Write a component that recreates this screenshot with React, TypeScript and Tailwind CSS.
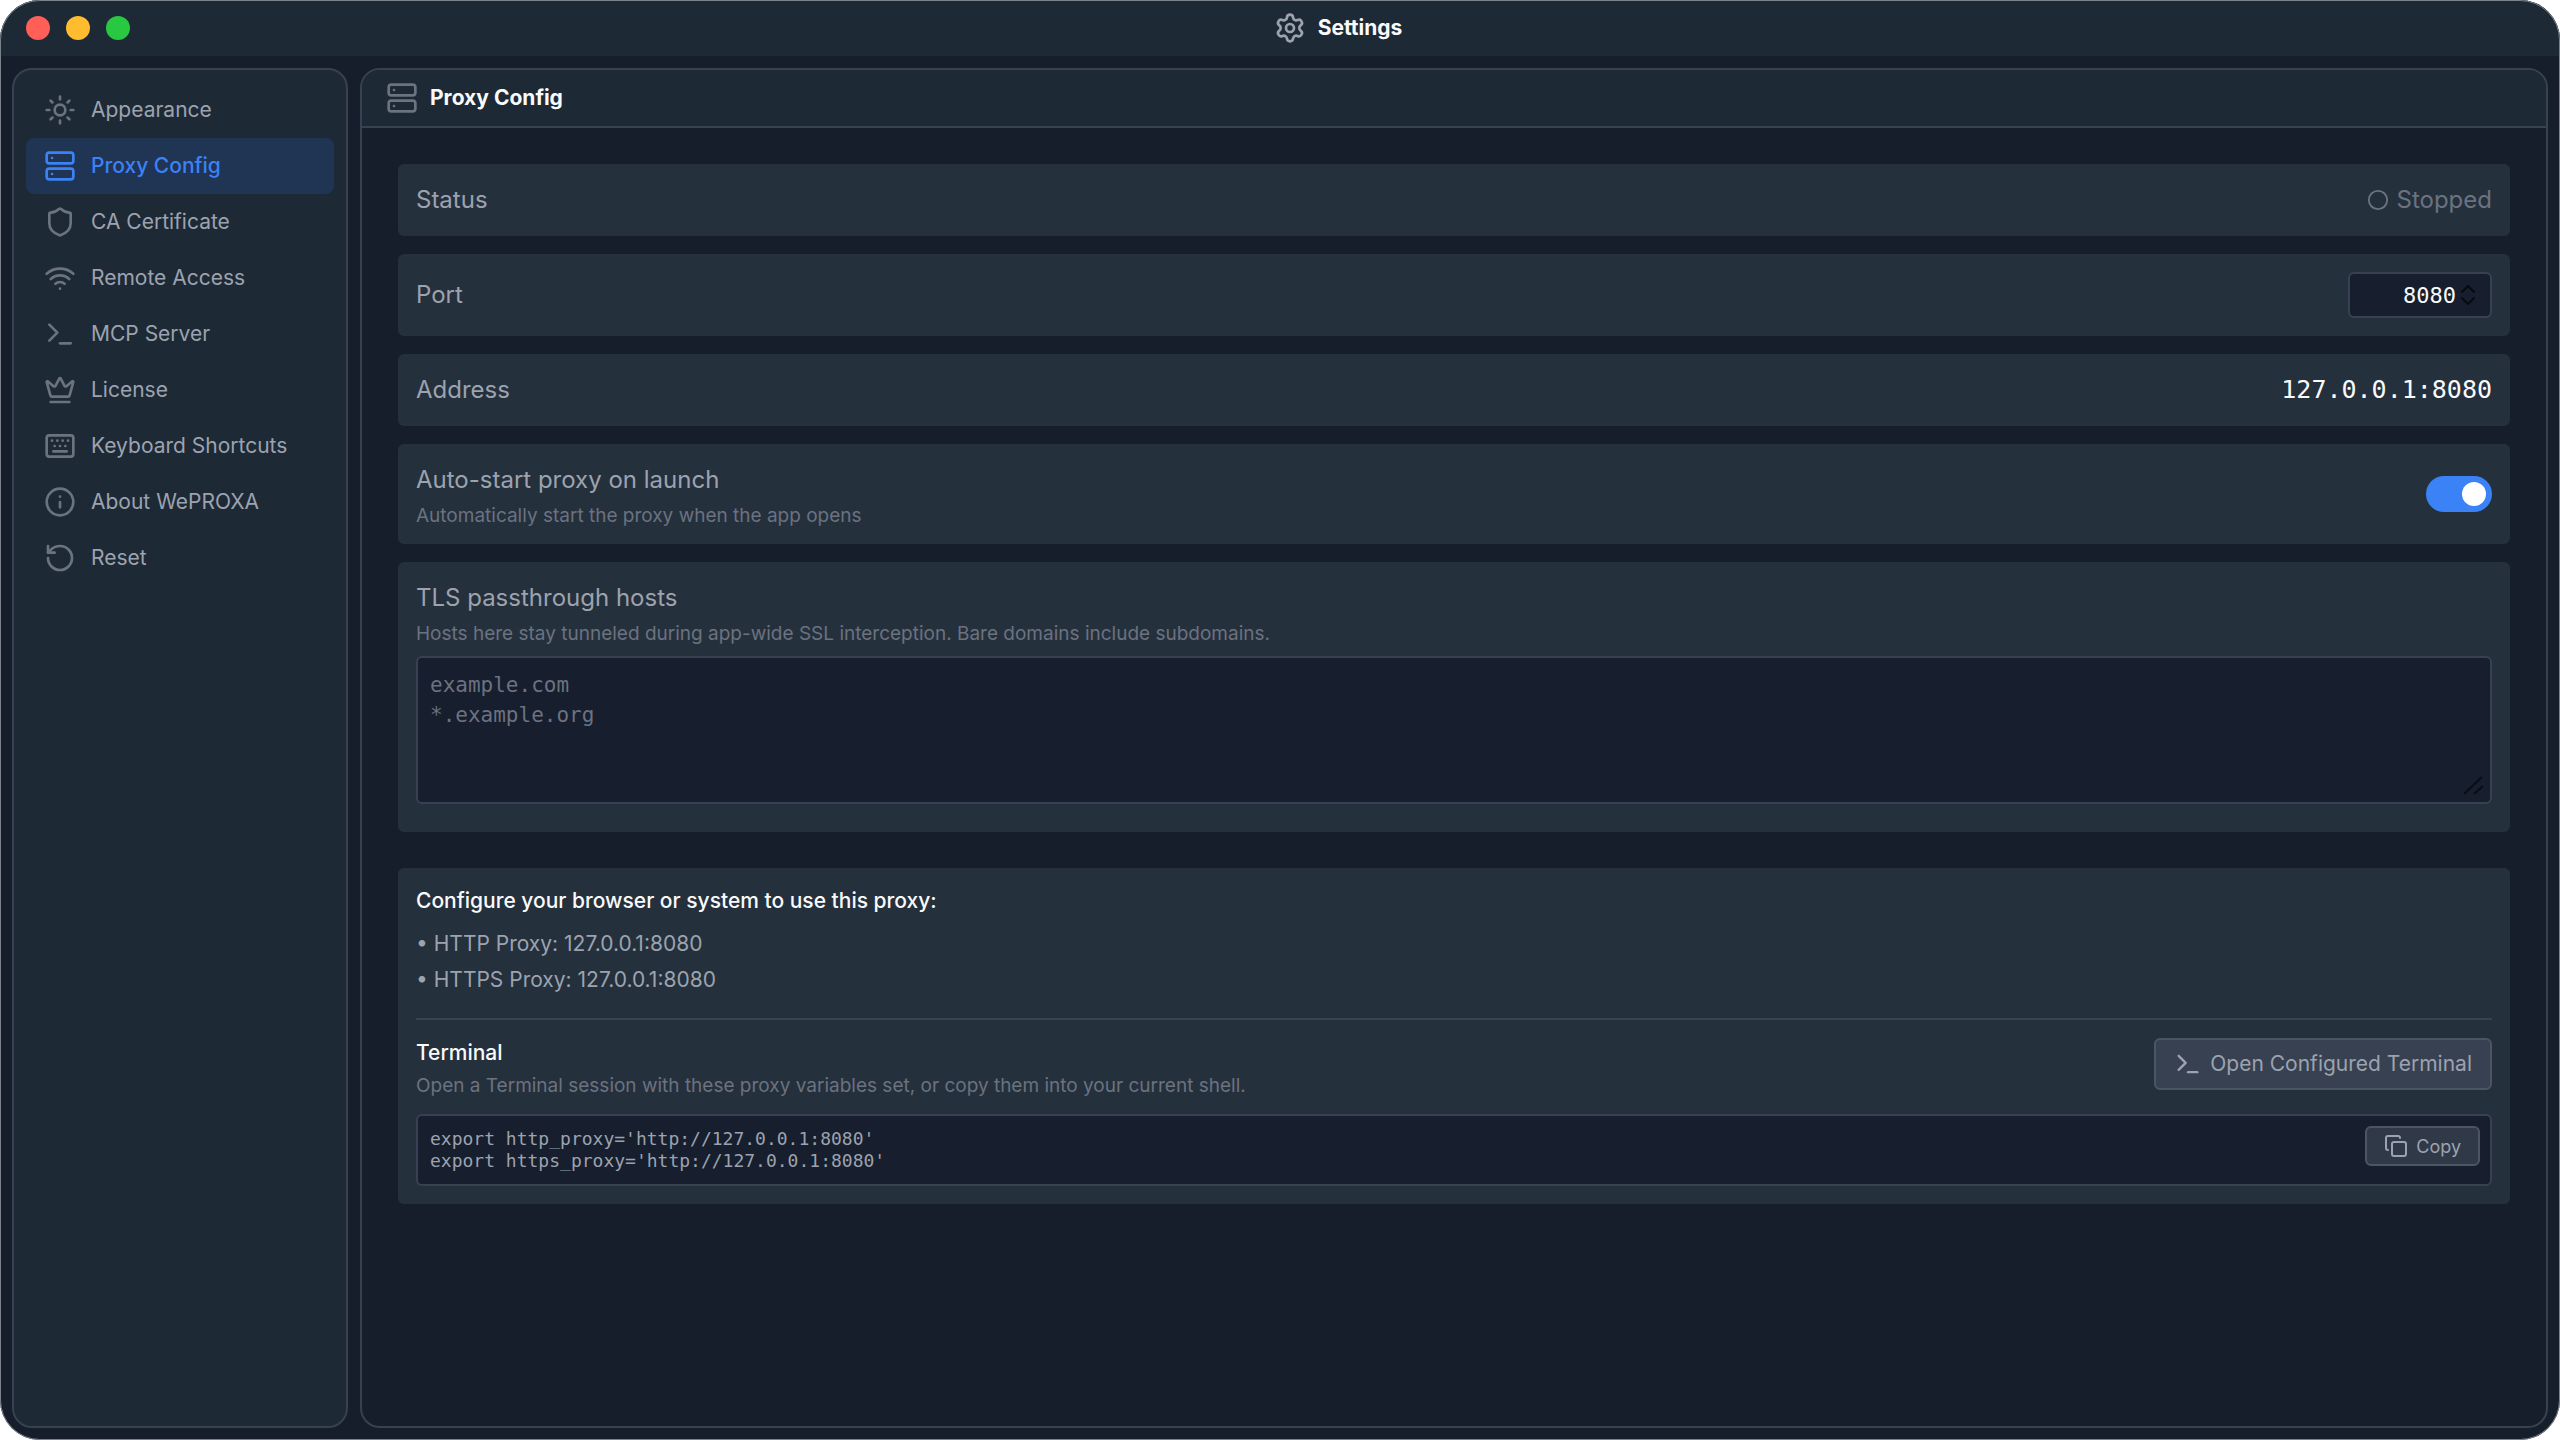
import { useState } from "react";
import type { ReactNode } from "react";
import {
  ChevronDown,
  ChevronUp,
  Circle,
  Copy,
  Crown,
  Info,
  Keyboard,
  RotateCcw,
  Server,
  Settings,
  Shield,
  Sun,
  Terminal,
  Wifi,
} from "lucide-react";

const navItems = [
  { label: "Appearance", icon: Sun },
  { label: "Proxy Config", icon: Server },
  { label: "CA Certificate", icon: Shield },
  { label: "Remote Access", icon: Wifi },
  { label: "MCP Server", icon: Terminal },
  { label: "License", icon: Crown },
  { label: "Keyboard Shortcuts", icon: Keyboard },
  { label: "About WePROXA", icon: Info },
  { label: "Reset", icon: RotateCcw },
];

const TitleBar = () => (
  <header className="flex h-14 shrink-0 items-center gap-3 bg-[#1e2936] px-[26px]">
    <div className="flex gap-4">
      <button aria-label="Close" className="size-6 rounded-full bg-[#ff5f57]" />
      <button aria-label="Minimize" className="size-6 rounded-full bg-[#febc2e]" />
      <button aria-label="Zoom" className="size-6 rounded-full bg-[#28c840]" />
    </div>
    <h1 className="flex grow items-center justify-center gap-3 text-[21px] font-bold text-gray-50">
      <Settings size={32} strokeWidth={2} className="text-[#9ca3af]" />
      Settings
    </h1>
  </header>
);

const Sidebar = ({ active, onSelect }: { active: string; onSelect: (label: string) => void }) => (
  <nav className="w-[336px] shrink-0 rounded-[20px] border-2 border-[#374151] bg-[#1e2936] p-3">
    <ul>
      {navItems.map(({ label, icon: Icon }) => (
        <li key={label}>
          <button
            onClick={() => onSelect(label)}
            className={
              label === active
                ? "flex h-14 w-full items-center gap-[15px] rounded-lg bg-[#203454] px-[18px] text-[21px] font-medium text-[#3b82f6]"
                : "flex h-14 w-full items-center gap-[15px] rounded-lg px-[18px] text-[21px] text-[#9ca3af]"
            }
          >
            <Icon
              size={32}
              strokeWidth={2}
              className={label === active ? "text-[#3b82f6]" : "text-[#6b7280]"}
            />
            {label}
          </button>
        </li>
      ))}
    </ul>
  </nav>
);

const Row = ({ children }: { children: ReactNode }) => (
  <div className="flex min-h-[72px] items-center justify-between rounded-md bg-[#25303d] px-[18px] text-[24px] text-[#9ca3af]">
    {children}
  </div>
);

const ProxyRows = () => {
  const [port, setPort] = useState(8080);
  const [autoStart, setAutoStart] = useState(true);

  return (
    <div className="flex flex-col gap-[18px]">
      <Row>
        <span>Status</span>
        <span className="flex items-center gap-2 text-[#6b7280]">
          <Circle size={22} strokeWidth={2} />
          Stopped
        </span>
      </Row>

      <Row>
        <label htmlFor="port">Port</label>
        <div className="my-[18px] flex h-[46px] w-36 items-center rounded-md border-2 border-[#374151] bg-[#171e2d] pr-[10px]">
          <input
            id="port"
            type="number"
            value={port}
            onChange={(e) => setPort(Number(e.target.value))}
            className="w-full min-w-0 appearance-none bg-transparent text-right font-['DejaVu_Sans_Mono',monospace] text-[22px] text-gray-50 outline-none [&::-webkit-inner-spin-button]:appearance-none"
          />
          <div className="flex flex-col text-[#070a10]">
            <button
              aria-label="Increase port"
              onClick={() => setPort(port + 1)}
              className="flex h-3 items-center"
            >
              <ChevronUp size={24} strokeWidth={2} className="shrink-0" />
            </button>
            <button
              aria-label="Decrease port"
              onClick={() => setPort(port - 1)}
              className="flex h-3 items-center"
            >
              <ChevronDown size={24} strokeWidth={2} className="shrink-0" />
            </button>
          </div>
        </div>
      </Row>

      <Row>
        <span>Address</span>
        <span className="font-['DejaVu_Sans_Mono',monospace] text-[25px] text-gray-50">127.0.0.1:8080</span>
      </Row>

      <Row>
        <label htmlFor="auto-start" className="flex flex-col pt-[18px] pb-[10px]">
          <span className="leading-9">Auto-start proxy on launch</span>
          <span className="text-[19px] leading-9 text-[#6b7280]">
            Automatically start the proxy when the app opens
          </span>
        </label>
        <input
          id="auto-start"
          type="checkbox"
          role="switch"
          checked={autoStart}
          onChange={(e) => setAutoStart(e.target.checked)}
          className="flex h-9 w-[66px] shrink-0 appearance-none items-center rounded-full bg-[#374151] p-1.5 before:size-6 before:rounded-full before:bg-white checked:justify-end checked:bg-[#3b82f6]"
        />
      </Row>

      <div className="rounded-md bg-[#25303d] px-[18px] pt-[18px] pb-7">
        <label htmlFor="tls-hosts" className="block text-[24px] leading-9 text-[#9ca3af]">
          TLS passthrough hosts
        </label>
        <p className="text-[19px] leading-9 text-[#6b7280]">
          Hosts here stay tunneled during app-wide SSL interception. Bare domains include subdomains.
        </p>
        <div className="relative mt-1">
          <textarea
            id="tls-hosts"
            placeholder={"example.com\n*.example.org"}
            className="block h-[148px] w-full resize-none rounded-md border-2 border-[#374151] bg-[#171e2d] p-3 font-['DejaVu_Sans_Mono',monospace] text-[21px] leading-[30px] text-gray-50 outline-none placeholder:text-[#6b7280]"
          />
          <svg
            viewBox="0 0 20 20"
            className="pointer-events-none absolute right-2 bottom-2 size-5 stroke-[#0a0d14]"
            strokeWidth="2"
          >
            <path d="M0 18 18 1M10 18l9-8" />
          </svg>
        </div>
      </div>
    </div>
  );
};

const SetupCard = () => {
  const exports = "export http_proxy='http://127.0.0.1:8080'\nexport https_proxy='http://127.0.0.1:8080'";

  return (
    <section className="mt-9 rounded-md bg-[#25303d] p-[18px]">
      <h3 className="text-[21px] leading-[30px] font-medium text-gray-50">
        Configure your browser or system to use this proxy:
      </h3>
      <ul className="mt-[10px] mb-5 text-[21px] leading-9 text-[#9ca3af]">
        <li>• HTTP Proxy: 127.0.0.1:8080</li>
        <li>• HTTPS Proxy: 127.0.0.1:8080</li>
      </ul>
      <div className="flex items-start justify-between border-t-2 border-[#374151] pt-[18px]">
        <div>
          <h3 className="text-[21px] leading-[30px] font-medium text-gray-50">Terminal</h3>
          <p className="mt-0.5 text-[19px] leading-8 text-[#6b7280]">
            Open a Terminal session with these proxy variables set, or copy them into your current shell.
          </p>
        </div>
        <button className="flex h-[52px] items-center gap-2 rounded-md border-2 border-[#4b5563] bg-[#374151] px-[18px] text-[21px] text-[#9ca3af]">
          <Terminal size={28} strokeWidth={2} />
          Open Configured Terminal
        </button>
      </div>
      <div className="mt-3 flex items-start justify-between rounded-md border-2 border-[#374151] bg-[#171e2d] py-[10px] pr-[10px] pl-3">
        <pre className="py-[2px] font-['DejaVu_Sans_Mono',monospace] text-[18px] leading-[22px] text-[#9ca3af]">
          {exports}
        </pre>
        <button
          onClick={() => navigator.clipboard.writeText(exports)}
          className="flex h-10 items-center gap-2 rounded-md border-2 border-[#4b5563] bg-[#303947] px-[17px] text-[18px] text-[#9ca3af]"
        >
          <Copy size={24} strokeWidth={2} />
          Copy
        </button>
      </div>
    </section>
  );
};

export default function App() {
  const [active, setActive] = useState("Proxy Config");

  return (
    <div className="flex min-h-screen flex-col overflow-hidden rounded-[40px] bg-[#171e2b] font-['Inter',sans-serif] outline-1 -outline-offset-1 outline-[#7b828a]">
      <TitleBar />
      <div className="flex grow gap-3 p-3">
        <Sidebar active={active} onSelect={setActive} />
        <main className="min-w-0 grow overflow-hidden rounded-[20px] border-2 border-[#374151]">
          <h2 className="flex h-[58px] items-center gap-3 border-b-2 border-[#374151] bg-[#1e2936] px-6 text-[21px] font-bold text-gray-50">
            <Server size={32} strokeWidth={2} className="text-[#6b7280]" />
            Proxy Config
          </h2>
          <div className="p-9">
            <ProxyRows />
            <SetupCard />
          </div>
        </main>
      </div>
    </div>
  );
}
